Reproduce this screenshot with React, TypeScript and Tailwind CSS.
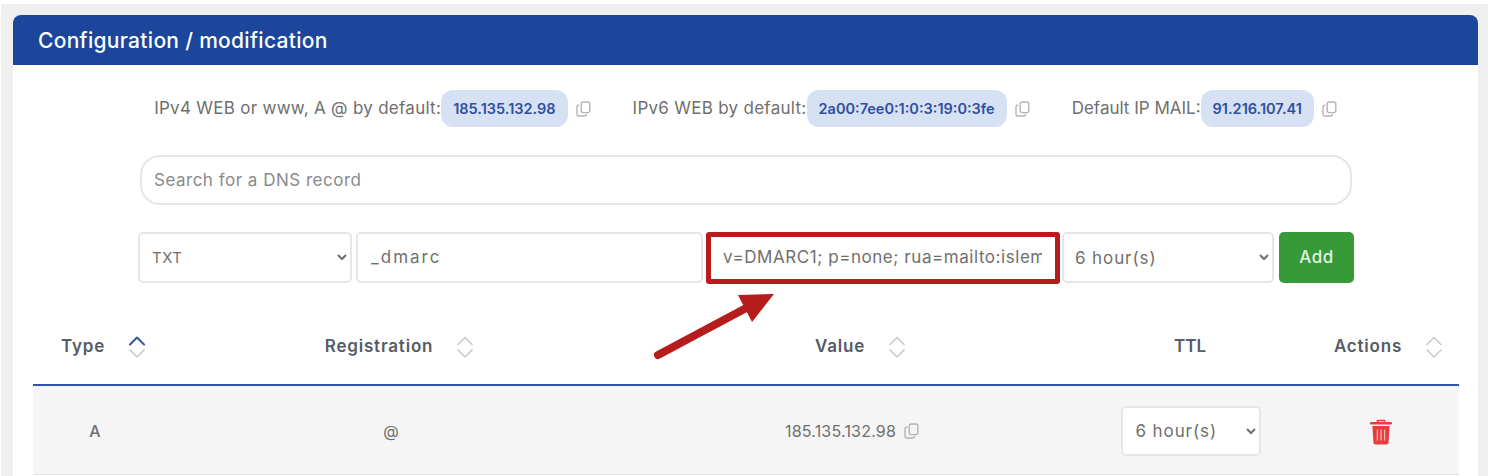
const font = "font-['Inter','Noto_Sans',sans-serif]";

function CopyIcon() {
  return (
    <svg width="15" height="16" viewBox="0 0 15 16" fill="none" stroke="#b4b4b4" strokeWidth="1.4" className="shrink-0">
      <rect x="5.2" y="1" width="8.6" height="10.6" rx="2" />
      <path d="M3.2 4.2H2.6A1.6 1.6 0 0 0 1 5.8v7.6A1.6 1.6 0 0 0 2.6 15h6.2a1.6 1.6 0 0 0 1.6-1.6v-.4" />
    </svg>
  );
}

function SortIcon({ active = false }: { active?: boolean }) {
  return (
    <svg width="16" height="24" viewBox="0 0 16 24" fill="none" strokeWidth="1.5" strokeLinecap="round" strokeLinejoin="round" className="shrink-0">
      <path d="M1 9.5 8 2.5l7 7" stroke={active ? '#2f55a8' : '#c8c8c8'} strokeWidth={active ? 2 : 1.5} />
      <path d="M1 15l7 7 7-7" stroke="#c8c8c8" />
    </svg>
  );
}

function TrashIcon() {
  return (
    <svg width="24" height="26" viewBox="0 0 24 26" fill="none">
      <path d="M8.5 3V1.5h7V3" stroke="#e53e3e" strokeWidth="1.6" />
      <rect x="1" y="3" width="22" height="2.6" rx="1" fill="#e53e3e" />
      <path d="M3.4 7h17.2l-1 16.6a2 2 0 0 1-2 1.9H6.4a2 2 0 0 1-2-1.9z" fill="#e53e3e" />
      <path d="M8.4 10.5v11M12 10.5v11M15.6 10.5v11" stroke="#f6b5b5" strokeWidth="1.3" />
    </svg>
  );
}

function IpChip({ label, ip, tight }: { label: string; ip: string; tight?: boolean }) {
  return (
    <div className="flex items-center gap-2">
      <div className="flex items-center">
        <span className={`text-[17px] text-[#6f6f6f] ${tight ? 'tracking-normal' : 'tracking-[0.28px]'}`}>{label}</span>
        <span className="flex h-[37px] items-center rounded-[12px] bg-[#d6e1f4] px-3 text-[14.5px] font-semibold text-[#2f4f9f]">{ip}</span>
      </div>
      <CopyIcon />
    </div>
  );
}

function HeaderCell({ label, sort, active }: { label: string; sort?: boolean; active?: boolean }) {
  return (
    <div className={`flex items-center justify-center gap-6 ${sort ? 'pl-4' : ''}`}>
      <span className={`text-[17px] font-semibold text-[#555c66] ${sort ? 'tracking-[0.8px]' : 'tracking-normal'}`}>{label}</span>
      {sort && <SortIcon active={active} />}
    </div>
  );
}

export default function App() {
  return (
    <div className={`${font} relative h-[476px] w-[1488px] overflow-hidden bg-white pl-[1px] pt-[4px]`}>
      <div className="h-[472px] overflow-hidden bg-[#efefef] pl-[12px] pr-[10px] pt-[11px]">
        <div className="flex h-[480px] flex-col rounded-t-[8px] bg-white">
          <div className="flex h-[50px] items-center rounded-t-[8px] bg-[#1b469b] pl-[25px] pt-[2px] text-[21px] font-medium tracking-[0.3px] text-white">
            Configuration / modification
          </div>

          <div className="mt-[25px] flex h-[37px] items-center justify-center gap-[42px]">
            <IpChip label="IPv4 WEB or www, A @ by default:" ip="185.135.132.98" />
            <IpChip label="IPv6 WEB by default:" ip="2a00:7ee0:1:0:3:19:0:3fe" />
            <IpChip label="Default IP MAIL:" ip="91.216.107.41" tight />
          </div>

          <div className="ml-[127px] mt-[28px] w-[1212px]">
            <input
              placeholder="Search for a DNS record"
              className="h-[50px] w-full rounded-[20px] border-2 border-[#e6e6e6] px-3 text-[17px] tracking-[0.5px] text-[#6f6f6f] outline-none placeholder:text-[#8a8a8a]"
            />
          </div>

          <div className="ml-[125px] mt-[27px] flex h-[51px] items-stretch gap-1">
            <select defaultValue="TXT" className="w-[214px] rounded-[5px] border-2 border-[#e6e6e6] bg-white pl-2 pr-2 text-[15px] tracking-[0.5px] text-[#6f6f6f] outline-none">
              <option>TXT</option>
              <option>A</option>
            </select>
            <input readOnly defaultValue="_dmarc" className="w-[347px] rounded-[5px] border-2 border-[#e6e6e6] pl-[13px] text-[17px] tracking-[2px] text-[#6f6f6f] outline-none" />
            <input readOnly defaultValue="v=DMARC1; p=none; rua=mailto:islemeyer@example.com" className="w-[351px] rounded-[5px] border-2 border-[#e6e6e6] px-[14px] text-[17px] tracking-[0.55px] text-[#6f6f6f] outline-none" />
            <select defaultValue="6" className="w-[212px] rounded-[5px] border-2 border-[#e6e6e6] bg-white pl-[7px] pr-1 text-[17px] tracking-[0.9px] text-[#6f6f6f] outline-none">
              <option value="6">6 hour(s)</option>
            </select>
            <button className="ml-[1px] w-[75px] rounded-[5px] bg-[#359a37] text-[17px] font-medium tracking-[0.5px] text-[#e4f3e4]">Add</button>
          </div>

          <div className="ml-[20px] mr-[19px] mt-[37px]">
            <div className="grid h-[66px] grid-cols-[124px_468px_454px_222px_158px] border-b-2 border-[#2f55a8] pb-[10px]">
              <HeaderCell label="Type" sort active />
              <HeaderCell label="Registration" sort />
              <HeaderCell label="Value" sort />
              <HeaderCell label="TTL" />
              <HeaderCell label="Actions" sort />
            </div>
            <div className="grid h-[89px] grid-cols-[124px_468px_454px_222px_158px] items-center border-b border-[#e4e4e4] bg-[#f5f5f5] pt-[1px] text-[16px] text-[#6f6f6f]">
              <div className="text-center font-medium">A</div>
              <div className="text-center">@</div>
              <div className="flex items-center justify-center gap-2">
                <span className="tracking-[0.2px]">185.135.132.98</span>
                <CopyIcon />
              </div>
              <div className="flex justify-center">
                <select defaultValue="6" className="ml-[1px] h-[50px] w-[140px] rounded-[5px] border-2 border-[#e6e6e6] bg-white pl-[9px] pr-1 text-[17px] tracking-[0.9px] text-[#6f6f6f] outline-none">
                  <option value="6">6 hour(s)</option>
                </select>
              </div>
              <div className="mt-[2px] flex justify-center pl-[2px]">
                <TrashIcon />
              </div>
            </div>
          </div>
        </div>
      </div>

      {/* annotation over the value field */}
      <div className="absolute left-[706px] top-[232px] h-[52px] w-[354px] rounded-[3px] border-[5px] border-[#b71c1c]" />
      <svg className="absolute left-[650px] top-[290px]" width="130" height="72" viewBox="0 0 130 72" fill="none">
        <path d="M8 65 L100 16" stroke="#b71c1c" strokeWidth="8" strokeLinecap="round" />
        <path d="M88 5 L124 4 L102 32 Z" fill="#b71c1c" />
      </svg>
    </div>
  );
}
